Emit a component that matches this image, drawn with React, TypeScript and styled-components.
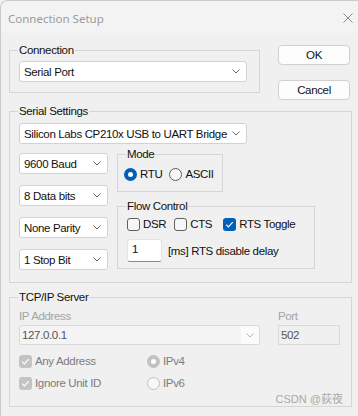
import React from 'react'
import styled, { createGlobalStyle } from 'styled-components'

const GlobalStyle = createGlobalStyle`
  html, body {
    margin: 0;
    padding: 0;
    background: #f0f0f0;
  }
`

const Window = styled.div`
  width: 358px;
  height: 416px;
  box-sizing: border-box;
  overflow: hidden;
  background: #f0f0f0;
  border-top: 1px solid #c9c9c9;
  border-left: 1px solid #c9c9c9;
  border-top-left-radius: 8px;
  font-family: 'Liberation Sans', Arial, sans-serif;
  font-size: 11.5px;
  letter-spacing: -0.35px;
  color: #111;
`

const TitleBar = styled.div`
  height: 32px;
  box-sizing: border-box;
  padding: 2px 0 0 7px;
  display: flex;
  align-items: center;
  justify-content: space-between;
  background: #f3f3f3;
  font-family: 'Noto Sans', 'Liberation Sans', sans-serif;
  font-size: 11.5px;
  letter-spacing: 0;
  color: #9b9b9b;
  svg {
    margin-right: 5px;
  }
`

const Body = styled.div`
  padding: 12px 0 0 8px;
`

const TopRow = styled.div`
  display: flex;
  align-items: flex-start;
  gap: 18px;
`

const Group = styled.div<{ $w: number; $h: number; $pt: number; $pl?: number; $mt?: number }>`
  position: relative;
  box-sizing: border-box;
  width: ${({ $w }) => $w}px;
  height: ${({ $h }) => $h}px;
  margin-top: ${({ $mt }) => $mt ?? 0}px;
  padding: ${({ $pt }) => $pt}px 0 0 ${({ $pl }) => $pl ?? 9}px;
  border: 1px solid #d6d6d6;
`

const Legend = styled.span`
  position: absolute;
  top: -7px;
  left: 8px;
  padding: 0 1px;
  line-height: 13px;
  background: #f0f0f0;
`

const ButtonCol = styled.div`
  display: flex;
  flex-direction: column;
  gap: 15px;
`

const Button = styled.div`
  box-sizing: border-box;
  width: 72px;
  height: 20px;
  display: flex;
  align-items: center;
  justify-content: center;
  background: #fdfdfd;
  border: 1px solid #d0d0d0;
  border-radius: 4px;
`

const Combo = styled.div<{ $w: number }>`
  box-sizing: border-box;
  width: ${({ $w }) => $w}px;
  height: 21px;
  display: flex;
  align-items: center;
  justify-content: space-between;
  padding: 0 6px 0 4px;
  background: #fff;
  border: 1px solid #d2d2d2;
  border-radius: 3px;
  color: #111;
`

const DisabledCombo = styled.div`
  box-sizing: border-box;
  width: 241px;
  height: 20px;
  display: flex;
  background: #fbfbfb;
  border: 1px solid #dadada;
  border-radius: 2px;
  color: #555;
`

const DisabledField = styled.div`
  flex: 1;
  display: flex;
  align-items: center;
  padding-left: 2px;
  background: #f4f4f4;
`

const DropZone = styled.div`
  width: 18px;
  display: flex;
  align-items: center;
  justify-content: center;
`

const SerialRow = styled.div`
  display: flex;
  gap: 9px;
  margin-top: 9px;
`

const Stack = styled.div<{ $gap: number }>`
  display: flex;
  flex-direction: column;
  gap: ${({ $gap }) => $gap}px;
`

const OptionRow = styled.div`
  display: flex;
  align-items: center;
  height: 13px;
`

const Option = styled.div<{ $mr?: number; $disabled?: boolean }>`
  display: flex;
  align-items: center;
  gap: 3px;
  margin-right: ${({ $mr }) => $mr ?? 0}px;
  color: ${({ $disabled }) => ($disabled ? '#7c7c7c' : '#111')};
  line-height: 13px;
`

const Radio = styled.span<{ $on?: boolean; $disabled?: boolean }>`
  box-sizing: border-box;
  width: 13px;
  height: 13px;
  border-radius: 50%;
  display: flex;
  align-items: center;
  justify-content: center;
  background: ${({ $on, $disabled }) => ($on ? ($disabled ? '#c2c2c2' : '#005fb8') : '#f7f7f7')};
  border: ${({ $on, $disabled }) => ($on ? 'none' : `1px solid ${$disabled ? '#c2c2c2' : '#5f5f5f'}`)};
  &::after {
    content: '';
    display: ${({ $on }) => ($on ? 'block' : 'none')};
    width: 5px;
    height: 5px;
    border-radius: 50%;
    background: #fff;
  }
`

const Box = styled.span<{ $on?: boolean; $disabled?: boolean }>`
  box-sizing: border-box;
  width: 13px;
  height: 13px;
  border-radius: 3px;
  display: flex;
  align-items: center;
  justify-content: center;
  background: ${({ $on, $disabled }) => ($on ? ($disabled ? '#c4c4c4' : '#005fb8') : '#f7f7f7')};
  border: ${({ $on }) => ($on ? 'none' : '1px solid #5f5f5f')};
`

const DelayRow = styled.div`
  display: flex;
  align-items: center;
  gap: 6px;
  margin-top: 8px;
`

const NumInput = styled.div`
  box-sizing: border-box;
  width: 35px;
  height: 23px;
  padding: 3px 0 0 4px;
  background: #fff;
  border: 1px solid #e4e4e4;
  border-bottom: 1px solid #8a8a8a;
  border-radius: 3px;
`

const TcpRow = styled.div`
  display: flex;
  gap: 18px;
`

const FieldLabel = styled.div`
  line-height: 13px;
  margin-bottom: 2px;
  color: #a3a3a3;
`

const PortInput = styled.div`
  box-sizing: border-box;
  width: 62px;
  height: 20px;
  display: flex;
  align-items: center;
  padding-left: 2px;
  background: #f0f0f0;
  border: 1px solid #dadada;
  color: #555;
`

const OptionGrid = styled.div`
  display: grid;
  grid-template-columns: 128px auto;
  row-gap: 9px;
  margin-top: 10px;
`

const Watermark = styled.span`
  position: absolute;
  right: 8px;
  bottom: 0;
  line-height: 14px;
  font-family: 'Liberation Sans', 'Noto Sans CJK SC', sans-serif;
  font-size: 11px;
  letter-spacing: 0;
  color: #a9a9a9;
`

const Chevron = ({ color = '#666' }: { color?: string }) => (
  <svg width="8" height="5" viewBox="0 0 8 5">
    <path d="M0.5 0.5 L4 4 L7.5 0.5" fill="none" stroke={color} strokeWidth="1" />
  </svg>
)

const Tick = () => (
  <svg width="13" height="13" viewBox="0 0 13 13">
    <path d="M3.2 6.6 L5.4 8.8 L9.8 4.2" fill="none" stroke="#fff" strokeWidth="1.2" />
  </svg>
)

const Select = ({ w, value }: { w: number; value: string }) => (
  <Combo $w={w}>
    <span>{value}</span>
    <Chevron />
  </Combo>
)

export default function App() {
  return (
    <>
      <GlobalStyle />
      <Window>
        <TitleBar>
          <span>Connection Setup</span>
          <svg width="10" height="10" viewBox="0 0 10 10">
            <path d="M0.5 0.5 L9.5 9.5 M9.5 0.5 L0.5 9.5" stroke="#8a8a8a" strokeWidth="1" />
          </svg>
        </TitleBar>
        <Body>
          <TopRow>
            <Group $w={251} $h={43} $pt={10} $mt={5}>
              <Legend>Connection</Legend>
              <Select w={228} value="Serial Port" />
            </Group>
            <ButtonCol>
              <Button>OK</Button>
              <Button>Cancel</Button>
            </ButtonCol>
          </TopRow>

          <Group $w={343} $h={172} $pt={11} $mt={11}>
            <Legend>Serial Settings</Legend>
            <Select w={228} value="Silicon Labs CP210x USB to UART Bridge" />
            <SerialRow>
              <Stack $gap={11}>
                <Select w={89} value="9600 Baud" />
                <Select w={89} value="8 Data bits" />
                <Select w={89} value="None Parity" />
                <Select w={89} value="1 Stop Bit" />
              </Stack>
              <div>
                <Group $w={106} $h={38} $pt={13} $pl={6} $mt={1}>
                  <Legend>Mode</Legend>
                  <OptionRow>
                    <Option $mr={7}>
                      <Radio $on />
                      RTU
                    </Option>
                    <Option>
                      <Radio />
                      ASCII
                    </Option>
                  </OptionRow>
                </Group>
                <Group $w={198} $h={63} $pt={11} $mt={14}>
                  <Legend>Flow Control</Legend>
                  <OptionRow>
                    <Option $mr={8}>
                      <Box />
                      DSR
                    </Option>
                    <Option $mr={11}>
                      <Box />
                      CTS
                    </Option>
                    <Option>
                      <Box $on>
                        <Tick />
                      </Box>
                      RTS Toggle
                    </Option>
                  </OptionRow>
                  <DelayRow>
                    <NumInput>1</NumInput>
                    <span>[ms] RTS disable delay</span>
                  </DelayRow>
                </Group>
              </div>
            </SerialRow>
          </Group>

          <Group $w={343} $h={110} $pt={12} $mt={14}>
            <Legend>TCP/IP Server</Legend>
            <TcpRow>
              <div>
                <FieldLabel>IP Address</FieldLabel>
                <DisabledCombo>
                  <DisabledField>127.0.0.1</DisabledField>
                  <DropZone>
                    <Chevron color="#b4b4b4" />
                  </DropZone>
                </DisabledCombo>
              </div>
              <div>
                <FieldLabel>Port</FieldLabel>
                <PortInput>502</PortInput>
              </div>
            </TcpRow>
            <OptionGrid>
              <Option $disabled>
                <Box $on $disabled>
                  <Tick />
                </Box>
                Any Address
              </Option>
              <Option $disabled>
                <Radio $on $disabled />
                IPv4
              </Option>
              <Option $disabled>
                <Box $on $disabled>
                  <Tick />
                </Box>
                Ignore Unit ID
              </Option>
              <Option $disabled>
                <Radio $disabled />
                IPv6
              </Option>
            </OptionGrid>
            <Watermark>CSDN @荻夜</Watermark>
          </Group>
        </Body>
      </Window>
    </>
  )
}
